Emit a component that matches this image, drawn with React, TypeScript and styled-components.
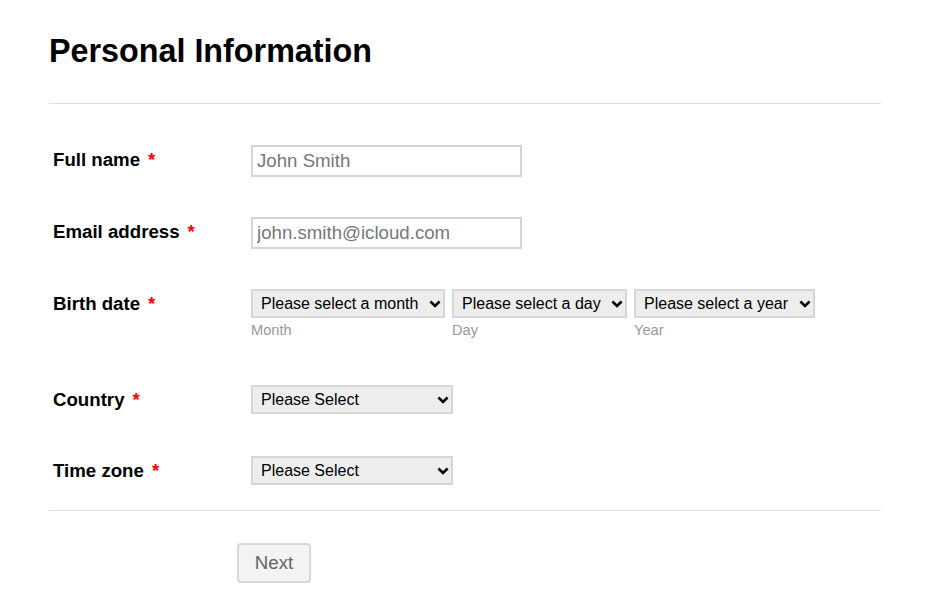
import React from "react";
import styled, { createGlobalStyle } from "styled-components";

const GlobalStyle = createGlobalStyle`
  body {
    margin: 0;
    background: #fff;
    font-family: "Liberation Sans", Arial, sans-serif;
    color: #000;
  }
`;

type Field = {
  label: string;
  placeholder: string;
  gap: number;
};

const fields: Field[] = [
  { label: "Full name", placeholder: "John Smith", gap: 40 },
  { label: "Email address", placeholder: "john.smith@icloud.com", gap: 40 },
];

const birthParts = [
  { text: "Please select a month", sub: "Month", width: 194 },
  { text: "Please select a day", sub: "Day", width: 175 },
  { text: "Please select a year", sub: "Year", width: 181 },
];

function Chevron() {
  return (
    <ChevronIcon width="12" height="8" viewBox="0 0 12 8" aria-hidden="true">
      <path
        d="M1.4 1.5 L6 6 L10.6 1.5"
        fill="none"
        stroke="#000"
        strokeWidth="2.6"
      />
    </ChevronIcon>
  );
}

function DropDown({ width, text }: { width: number; text: string }) {
  return (
    <SelectWrap $width={width}>
      <Select defaultValue="">
        <option value="">{text}</option>
      </Select>
      <Chevron />
    </SelectWrap>
  );
}

export default function App() {
  return (
    <>
      <GlobalStyle />
      <Page>
        <Header>
          <Title>Personal Information</Title>
        </Header>
        <FormBody>
          {fields.map((f) => (
            <Row key={f.label} $gap={f.gap}>
              <Label>
                {f.label}
                <Required>*</Required>
              </Label>
              <TextInput placeholder={f.placeholder} />
            </Row>
          ))}
          <Row $gap={46}>
            <Label>
              Birth date
              <Required>*</Required>
            </Label>
            <DateGroup>
              {birthParts.map((p) => (
                <DatePart key={p.sub}>
                  <DropDown width={p.width} text={p.text} />
                  <SubLabel>{p.sub}</SubLabel>
                </DatePart>
              ))}
            </DateGroup>
          </Row>
          <Row $gap={41}>
            <Label>
              Country
              <Required>*</Required>
            </Label>
            <DropDown width={202} text="Please Select" />
          </Row>
          <Row $gap={24}>
            <Label>
              Time zone
              <Required>*</Required>
            </Label>
            <DropDown width={202} text="Please Select" />
          </Row>
        </FormBody>
        <Footer>
          <NextButton type="button">Next</NextButton>
        </Footer>
      </Page>
    </>
  );
}

const Page = styled.div`
  width: 832px;
  padding: 0 49px;
`;

const Header = styled.div`
  padding: 33px 0 34px;
  border-bottom: 1px solid #e0e0e0;
`;

const Title = styled.h1`
  margin: 0;
  font-size: 32.3px;
  line-height: 36px;
  font-weight: bold;
`;

const FormBody = styled.div`
  padding: 41px 0 0 4px;
  border-bottom: 1px solid #e0e0e0;
`;

const Row = styled.div<{ $gap: number }>`
  display: flex;
  align-items: flex-start;
  margin-bottom: ${(p) => p.$gap}px;
`;

const Label = styled.label`
  width: 198px;
  flex-shrink: 0;
  font-size: 18.67px;
  font-weight: bold;
  line-height: 30px;
`;

const Required = styled.span`
  color: #f00;
  margin-left: 8px;
`;

const TextInput = styled.input`
  box-sizing: border-box;
  width: 271px;
  height: 32px;
  padding: 0 4px;
  border: 2px solid #d6d6d6;
  font-family: "Liberation Sans", Arial, sans-serif;
  font-size: 18.67px;
  color: #555;
  outline: none;
  &::placeholder {
    color: #777;
  }
`;

const DateGroup = styled.div`
  display: flex;
  gap: 7px;
`;

const DatePart = styled.div`
  display: flex;
  flex-direction: column;
`;

const SelectWrap = styled.div<{ $width: number }>`
  position: relative;
  width: ${(p) => p.$width}px;
  height: 29px;
`;

const Select = styled.select`
  appearance: none;
  box-sizing: border-box;
  width: 100%;
  height: 100%;
  padding: 0 22px 0 8px;
  background: #ededed;
  border: 2px solid #d6d6d6;
  border-radius: 0;
  font-family: "Liberation Sans", Arial, sans-serif;
  font-size: 16px;
  color: #000;
  outline: none;
`;

const ChevronIcon = styled.svg`
  position: absolute;
  right: 4px;
  top: 11px;
  pointer-events: none;
`;

const SubLabel = styled.span`
  margin-top: 3px;
  font-size: 14.67px;
  line-height: 18px;
  color: #999;
`;

const Footer = styled.div`
  padding: 32px 0 0 188px;
`;

const NextButton = styled.button`
  box-sizing: border-box;
  width: 74px;
  height: 40px;
  background: #f3f3f3;
  border: 2px solid #d8d8d8;
  border-radius: 4px;
  font-family: "Liberation Sans", Arial, sans-serif;
  font-size: 18.67px;
  color: #666;
  box-shadow: 0 1px 1px rgba(0, 0, 0, 0.08);
`;
